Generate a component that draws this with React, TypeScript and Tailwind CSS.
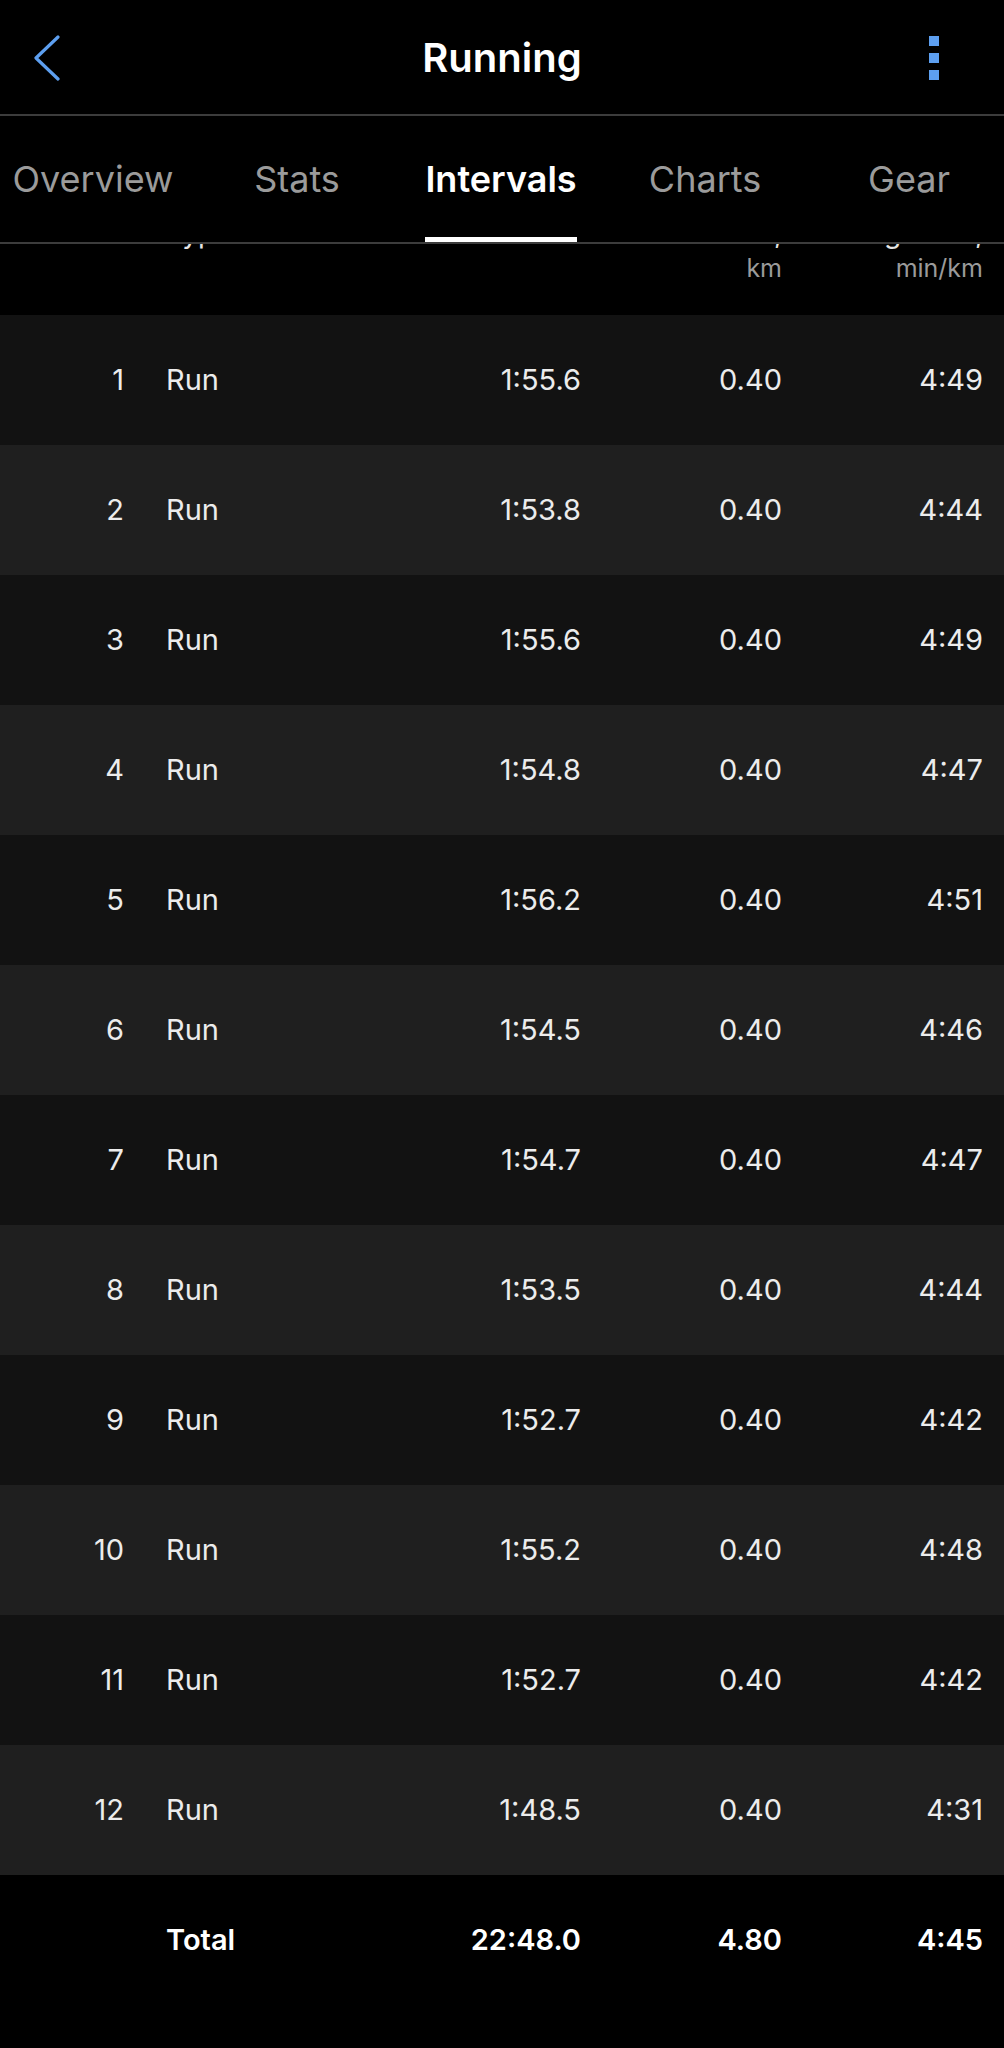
import { Fragment } from "react";

type Lap = {
  n: number;
  time: string;
  dist: string;
  pace: string;
};

const laps: Lap[] = [
  { n: 1, time: "1:55.6", dist: "0.40", pace: "4:49" },
  { n: 2, time: "1:53.8", dist: "0.40", pace: "4:44" },
  { n: 3, time: "1:55.6", dist: "0.40", pace: "4:49" },
  { n: 4, time: "1:54.8", dist: "0.40", pace: "4:47" },
  { n: 5, time: "1:56.2", dist: "0.40", pace: "4:51" },
  { n: 6, time: "1:54.5", dist: "0.40", pace: "4:46" },
  { n: 7, time: "1:54.7", dist: "0.40", pace: "4:47" },
  { n: 8, time: "1:53.5", dist: "0.40", pace: "4:44" },
  { n: 9, time: "1:52.7", dist: "0.40", pace: "4:42" },
  { n: 10, time: "1:55.2", dist: "0.40", pace: "4:48" },
  { n: 11, time: "1:52.7", dist: "0.40", pace: "4:42" },
  { n: 12, time: "1:48.5", dist: "0.40", pace: "4:31" },
];

const tabs = ["Overview", "Stats", "Intervals", "Charts", "Gear"];

function Header() {
  return (
    <div className="flex h-[116px] items-center border-b-2 border-[#3c3c3c] pt-[2px]">
      <div className="flex w-[120px] pl-[33px]">
        <svg width="28" height="46" viewBox="0 0 28 46" fill="none">
          <polyline
            points="25,2 3,23 25,44"
            stroke="#5d9ff0"
            strokeWidth="3.2"
            strokeLinecap="round"
            strokeLinejoin="round"
          />
        </svg>
      </div>
      <h1 className="flex-1 text-center text-[40px] font-semibold text-white">Running</h1>
      <div className="flex w-[120px] justify-end pr-[65px]">
        <div className="flex flex-col gap-[7px]">
          <span className="block h-[10px] w-[10px] bg-[#5d9ff0]" />
          <span className="block h-[10px] w-[10px] bg-[#5d9ff0]" />
          <span className="block h-[10px] w-[10px] bg-[#5d9ff0]" />
        </div>
      </div>
    </div>
  );
}

function Tabs() {
  return (
    <div className="h-[128px] overflow-hidden border-b-2 border-[#3c3c3c]">
      <div className="-ml-[9px] flex h-full">
        {tabs.map((t) => {
          const active = t === "Intervals";
          return (
            <div key={t} className="flex h-full w-[204px] shrink-0 justify-center">
              <div className="flex h-full flex-col">
                <div
                  className={
                    active
                      ? "flex flex-1 items-center pt-[5px] text-[36px] font-semibold text-white"
                      : "flex flex-1 items-center pt-[5px] text-[36px] text-[#9b9b9b]"
                  }
                >
                  {t}
                </div>
                <div className={active ? "h-[5px] bg-white" : "h-[5px]"} />
              </div>
            </div>
          );
        })}
      </div>
    </div>
  );
}

// header labels are scrolled up under the tab bar, only their lower part shows
function ColumnHeads() {
  const cols = [
    { top: "", unit: "", cls: "w-[124px] text-right" },
    { top: "Type", unit: "", cls: "ml-[42px] flex-1" },
    { top: "Time", unit: "", cls: "w-[160px] text-right" },
    { top: "Dist.,", unit: "km", cls: "w-[201px] text-right" },
    { top: "Avg Pace,", unit: "min/km", cls: "w-[201px] text-right" },
  ];
  return (
    <div className="h-[71px] overflow-hidden bg-black pr-[21px]">
      <div className="-mt-[27px] flex">
        {cols.map((c, i) => (
          <div key={i} className={c.cls}>
            <div className="h-[32px] text-[28px] leading-[32px] text-[#e6e6e6]">{c.top}</div>
            <div className="mt-[4px] h-[30px] text-[25px] leading-[30px] text-[#9a9a9a]">{c.unit}</div>
          </div>
        ))}
      </div>
    </div>
  );
}

function Row({ lap, shade }: { lap: Lap; shade: boolean }) {
  return (
    <div
      className={
        shade
          ? "flex h-[130px] items-center bg-[#1f1f1f] pr-[21px] text-[29px] text-[#ececec]"
          : "flex h-[130px] items-center bg-[#121212] pr-[21px] text-[29px] text-[#ececec]"
      }
    >
      <div className="w-[124px] text-right">{lap.n}</div>
      <div className="ml-[42px] flex-1">Run</div>
      <div className="w-[160px] text-right">{lap.time}</div>
      <div className="w-[201px] text-right">{lap.dist}</div>
      <div className="w-[201px] text-right">{lap.pace}</div>
    </div>
  );
}

export default function App() {
  return (
    <div
      className="min-h-[2048px] bg-black"
      style={{ fontFamily: "Inter, 'Noto Sans', 'Liberation Sans', sans-serif" }}
    >
      <Header />
      <Tabs />
      <ColumnHeads />
      {laps.map((lap, i) => (
        <Fragment key={lap.n}>
          <Row lap={lap} shade={i % 2 === 1} />
        </Fragment>
      ))}
      <div className="flex h-[130px] items-center pr-[21px] text-[29px] font-semibold text-white">
        <div className="w-[124px]" />
        <div className="ml-[42px] flex-1">Total</div>
        <div className="w-[160px] text-right">22:48.0</div>
        <div className="w-[201px] text-right">4.80</div>
        <div className="w-[201px] text-right">4:45</div>
      </div>
    </div>
  );
}
